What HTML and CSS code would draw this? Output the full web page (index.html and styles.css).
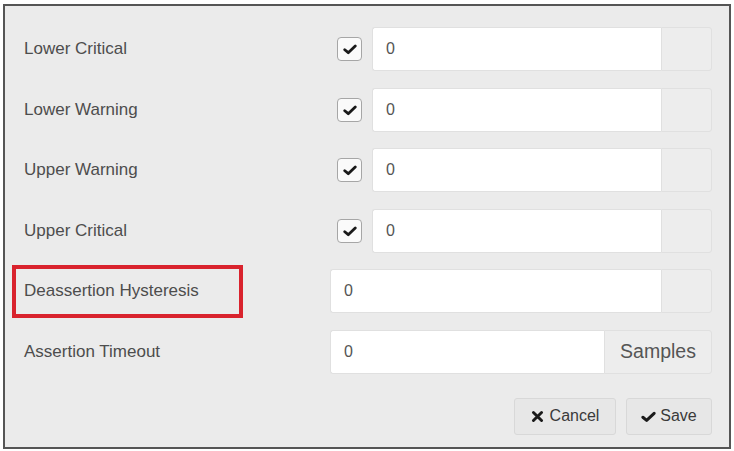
FILE: index.html
```html
<!DOCTYPE html>
<html lang="en">
<head>
    <meta charset="UTF-8">
    <title>Threshold Settings</title>
    <link rel="stylesheet" href="styles.css">
</head>
<body>
    <div class="panel">
        <div class="row">
            <div class="label">Lower Critical</div>
            <div class="control">
                <span class="check">
                    <svg viewBox="0 0 16 16" width="14" height="14"><path d="M2 8.8 L6 12.2 L14 4.6" fill="none" stroke="#1a1a1a" stroke-width="3.2" stroke-linecap="round" stroke-linejoin="round"/></svg>
                </span>
                <div class="input-group">
                    <div class="field">0</div>
                    <div class="addon"></div>
                </div>
            </div>
        </div>

        <div class="row">
            <div class="label">Lower Warning</div>
            <div class="control">
                <span class="check">
                    <svg viewBox="0 0 16 16" width="14" height="14"><path d="M2 8.8 L6 12.2 L14 4.6" fill="none" stroke="#1a1a1a" stroke-width="3.2" stroke-linecap="round" stroke-linejoin="round"/></svg>
                </span>
                <div class="input-group">
                    <div class="field">0</div>
                    <div class="addon"></div>
                </div>
            </div>
        </div>

        <div class="row">
            <div class="label">Upper Warning</div>
            <div class="control">
                <span class="check">
                    <svg viewBox="0 0 16 16" width="14" height="14"><path d="M2 8.8 L6 12.2 L14 4.6" fill="none" stroke="#1a1a1a" stroke-width="3.2" stroke-linecap="round" stroke-linejoin="round"/></svg>
                </span>
                <div class="input-group">
                    <div class="field">0</div>
                    <div class="addon"></div>
                </div>
            </div>
        </div>

        <div class="row">
            <div class="label">Upper Critical</div>
            <div class="control">
                <span class="check">
                    <svg viewBox="0 0 16 16" width="14" height="14"><path d="M2 8.8 L6 12.2 L14 4.6" fill="none" stroke="#1a1a1a" stroke-width="3.2" stroke-linecap="round" stroke-linejoin="round"/></svg>
                </span>
                <div class="input-group">
                    <div class="field">0</div>
                    <div class="addon"></div>
                </div>
            </div>
        </div>

        <div class="row">
            <div class="label"><span class="marked">Deassertion Hysteresis</span></div>
            <div class="control">
                <div class="input-group">
                    <div class="field">0</div>
                    <div class="addon"></div>
                </div>
            </div>
        </div>

        <div class="row">
            <div class="label">Assertion Timeout</div>
            <div class="control">
                <div class="input-group">
                    <div class="field">0</div>
                    <div class="addon addon-text">Samples</div>
                </div>
            </div>
        </div>

        <div class="actions">
            <button class="btn btn-cancel">
                <svg viewBox="0 0 16 16" width="13" height="13"><path d="M3 3 L13 13 M13 3 L3 13" fill="none" stroke="#1a1a1a" stroke-width="3.6" stroke-linecap="round"/></svg>
                Cancel
            </button>
            <button class="btn btn-save">
                <svg viewBox="0 0 16 16" width="15" height="15"><path d="M2 8.8 L6 12.2 L14 4.6" fill="none" stroke="#1a1a1a" stroke-width="3.2" stroke-linecap="round" stroke-linejoin="round"/></svg>
                Save
            </button>
        </div>
    </div>
</body>
</html>
```

FILE: styles.css
```css
body {
    margin: 0;
    background-color: #ffffff;
    font-family: 'Liberation Sans', Arial, sans-serif;
    color: #4a4a4a;
}

.panel {
    box-sizing: border-box;
    height: 445px;
    margin: 4px 3px 2px 3px;
    padding: 21px 17px 0 19px;
    background-color: #ebebeb;
    border: 2px solid #555555;
}

.row {
    display: flex;
    align-items: center;
    height: 44px;
    margin-bottom: 16.6px;
}

.label {
    flex: 1;
    font-size: 17px;
    color: #4d4d4d;
}

.marked {
    box-sizing: border-box;
    display: flex;
    align-items: center;
    width: 231px;
    height: 53px;
    margin-left: -12px;
    padding-left: 8px;
    border: 4px solid #d9232d;
}

.control {
    display: flex;
    align-items: center;
    width: 382px;
}

.check {
    box-sizing: border-box;
    display: flex;
    align-items: center;
    justify-content: center;
    width: 25px;
    height: 24px;
    margin-left: 7px;
    margin-right: 10px;
    background-color: #fafafa;
    border: 1px solid #a6a6a6;
    border-radius: 4px;
}

.input-group {
    flex: 1;
    display: flex;
    height: 44px;
}

.field {
    flex: 1;
    display: flex;
    align-items: center;
    padding-left: 13px;
    background-color: #ffffff;
    border: 1px solid #e0e0e0;
    border-right: none;
    border-radius: 3px 0 0 3px;
    font-size: 16px;
    color: #555555;
}

.addon {
    width: 49px;
    background-color: #ededed;
    border: 1px solid #e0e0e0;
    border-radius: 0 3px 3px 0;
}

.addon-text {
    width: 106px;
    display: flex;
    align-items: center;
    justify-content: center;
    font-size: 19.5px;
    color: #555555;
}

.actions {
    display: flex;
    justify-content: flex-end;
    gap: 10px;
    margin-top: 24px;
}

.btn {
    display: flex;
    align-items: center;
    justify-content: center;
    gap: 6px;
    height: 37px;
    background-color: #e7e7e7;
    border: 1px solid #d8d8d8;
    border-radius: 3px;
    font-family: 'Liberation Sans', Arial, sans-serif;
    font-size: 16px;
    color: #3a3a3a;
}

.btn-cancel {
    width: 102px;
}

.btn-save {
    width: 86px;
    gap: 4px;
}
```
